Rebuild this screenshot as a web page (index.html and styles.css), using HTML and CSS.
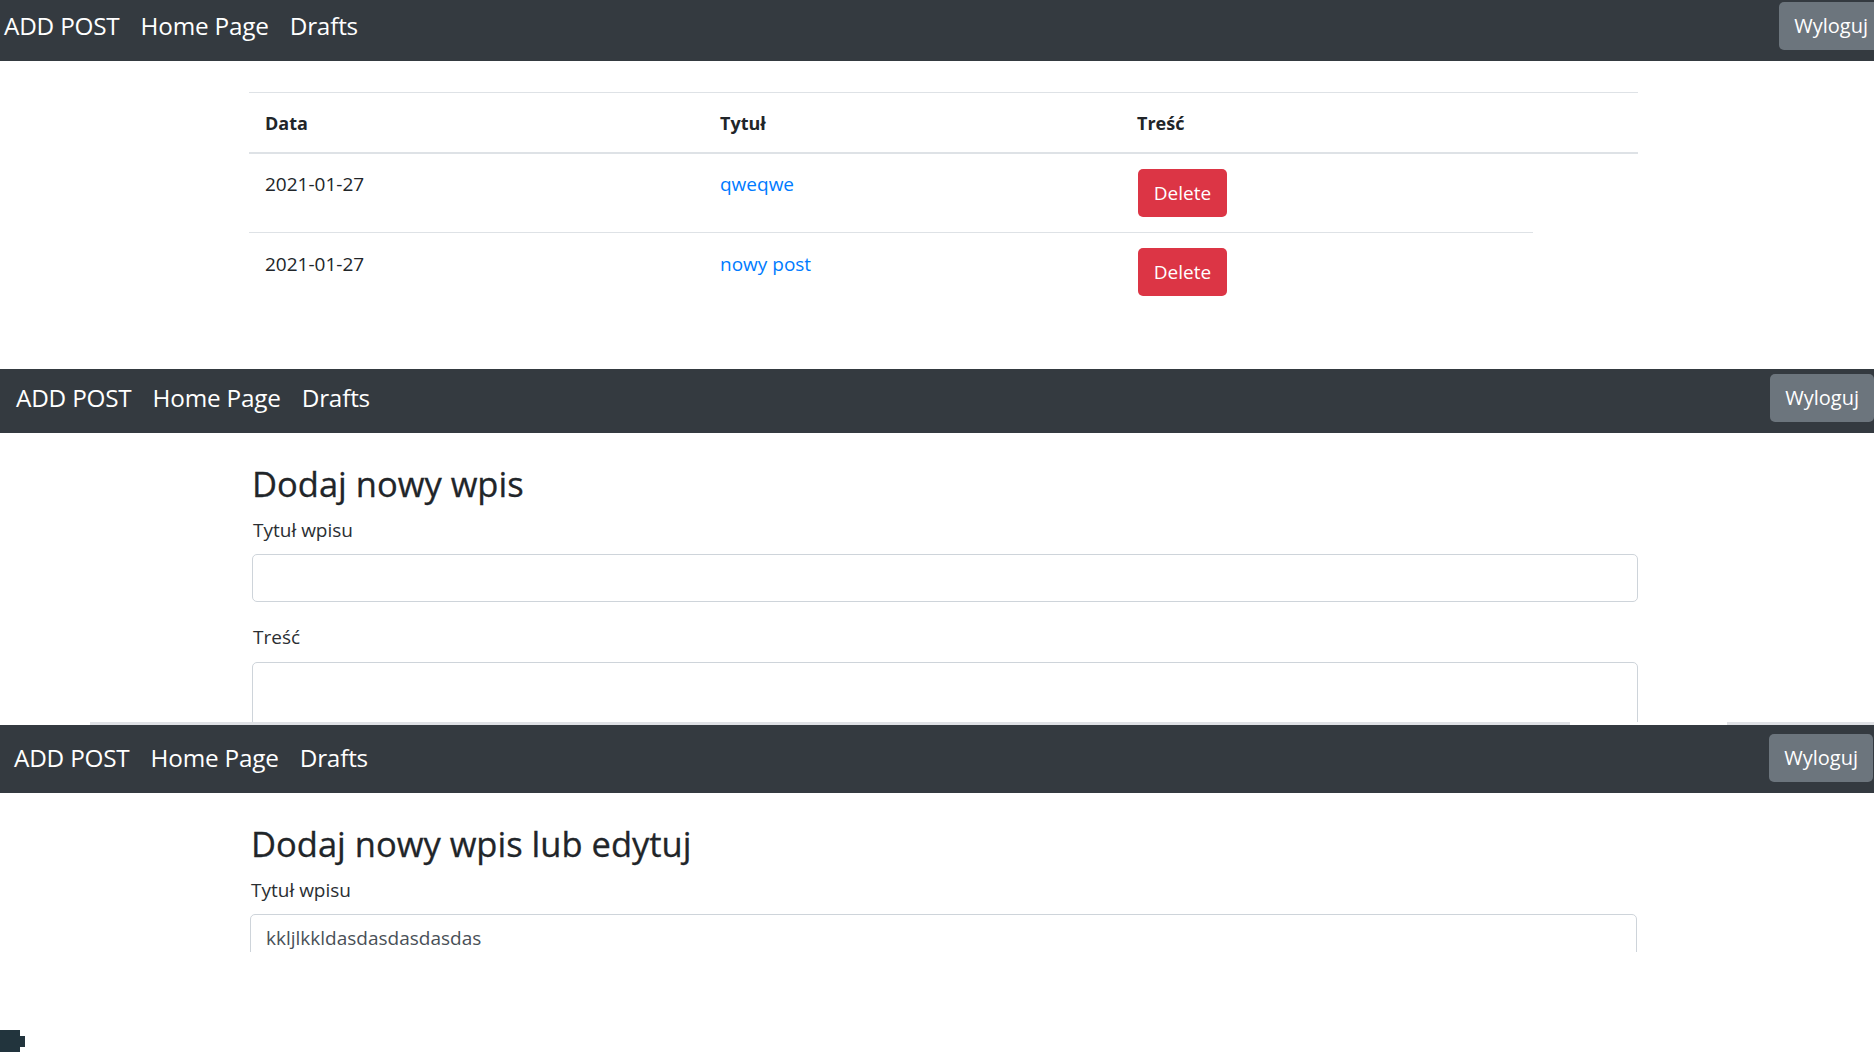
FILE: index.html
```html
<!DOCTYPE html>
<html lang="pl">
<head>
<meta charset="utf-8">
<title>Posts</title>
<link rel="stylesheet" href="styles.css">
</head>
<body>
<section class="shot shot-1">
  <nav class="navbar nav-1">
    <div class="nav-links">
      <a class="nav-link" href="#">ADD POST</a>
      <a class="nav-link" href="#">Home Page</a>
      <a class="nav-link" href="#">Drafts</a>
    </div>
    <button class="btn-logout" type="button">Wyloguj</button>
  </nav>
  <div class="posts">
    <div class="posts-head">
      <div class="th">Data</div>
      <div class="th">Tytuł</div>
      <div class="th">Treść</div>
    </div>
    <div class="posts-row row-first">
      <div class="td">2021-01-27</div>
      <div class="td"><a class="post-link" href="#">qweqwe</a></div>
      <div class="td-btn"><button class="btn-delete" type="button">Delete</button></div>
    </div>
    <div class="posts-row row-last">
      <div class="td">2021-01-27</div>
      <div class="td"><a class="post-link" href="#">nowy post</a></div>
      <div class="td-btn"><button class="btn-delete" type="button">Delete</button></div>
    </div>
  </div>
</section>

<section class="shot shot-2">
  <nav class="navbar nav-2">
    <div class="nav-links">
      <a class="nav-link" href="#">ADD POST</a>
      <a class="nav-link" href="#">Home Page</a>
      <a class="nav-link" href="#">Drafts</a>
    </div>
    <button class="btn-logout" type="button">Wyloguj</button>
  </nav>
  <form class="post-form form-2">
    <h2 class="form-title">Dodaj nowy wpis</h2>
    <div class="form-group">
      <label class="form-label">Tytuł wpisu</label>
      <input class="form-control" type="text">
    </div>
    <div class="form-group">
      <label class="form-label">Treść</label>
      <textarea class="form-control form-area"></textarea>
    </div>
  </form>
</section>

<div class="seam">
  <div class="seam-blank seam-left"></div>
  <div class="seam-bar seam-bar-a"></div>
  <div class="seam-blank seam-gap"></div>
  <div class="seam-bar seam-bar-b"></div>
</div>

<section class="shot shot-3">
  <nav class="navbar nav-3">
    <div class="nav-links">
      <a class="nav-link" href="#">ADD POST</a>
      <a class="nav-link" href="#">Home Page</a>
      <a class="nav-link" href="#">Drafts</a>
    </div>
    <button class="btn-logout" type="button">Wyloguj</button>
  </nav>
  <form class="post-form form-3">
    <h2 class="form-title">Dodaj nowy wpis lub edytuj</h2>
    <div class="form-group">
      <label class="form-label">Tytuł wpisu</label>
      <input class="form-control" type="text" value="kkljlkkldasdasdasdasdas">
    </div>
  </form>
</section>

<div class="page-foot">
  <svg class="corner-mark" width="26" height="22" viewBox="0 0 26 22" aria-hidden="true">
    <path d="M0 0 H20 V6 H25 V17 H20 V22 H0 Z" fill="#22343d"/>
  </svg>
</div>
</body>
</html>
```

FILE: styles.css
```css
html, body {
  margin: 0;
  padding: 0;
  background: #fff;
  width: 1874px;
  height: 1052px;
  overflow: hidden;
  font-family: "Open Sans", "Noto Sans", "Liberation Sans", sans-serif;
  color: #212529;
}

.shot {
  overflow: hidden;
  box-sizing: border-box;
}

.shot-1 { height: 369px; }
.shot-2 { height: 353px; }
.shot-3 { height: 227px; }

/* Navbar */
.navbar {
  display: flex;
  align-items: flex-start;
  background: #343a40;
  box-sizing: border-box;
  overflow: hidden;
}

.nav-1 { height: 61px; padding: 2px 0 0 4px; }
.nav-1 .btn-logout { margin-right: -9px; }

.nav-2 { height: 64px; padding: 5px 0 0 16px; }

.nav-3 { height: 68px; padding: 9px 1px 0 14px; }

.nav-links {
  display: flex;
  gap: 21px;
}

.nav-link {
  color: #fff;
  text-decoration: none;
  font-size: 24.3px;
  line-height: 48px;
  height: 48px;
  white-space: nowrap;
  letter-spacing: -0.2px;
}

.btn-logout {
  margin-left: auto;
  flex: none;
  height: 48px;
  padding: 0 15px;
  border: 0;
  border-radius: 5px;
  background: #6c757d;
  color: #fff;
  font-family: inherit;
  font-size: 20px;
  line-height: 48px;
  white-space: nowrap;
}

/* Posts table */
.posts {
  margin: 31px 0 0 249px;
  width: 1389px;
}

.posts-head,
.posts-row {
  display: grid;
  grid-template-columns: 455px 417px 1fr;
}

.posts-head {
  border-top: 1px solid #dee2e6;
  border-bottom: 2px solid #dee2e6;
}

.th {
  padding: 16px 16px 14px;
  font-size: 18px;
  line-height: 29px;
  font-weight: 700;
}

.posts-row {
  align-items: start;
}

.row-first {
  width: 1284px;
  border-bottom: 1px solid #dee2e6;
}

.td {
  padding: 16px 16px 0;
  font-size: 19px;
  line-height: 28.5px;
}

.row-last .td { padding-top: 17px; }

.td-btn {
  padding: 15px 16px 15px 17px;
}

.post-link {
  color: #007bff;
  text-decoration: none;
}

.btn-delete {
  display: block;
  height: 48px;
  width: 89px;
  padding: 0;
  border: 0;
  border-radius: 5px;
  background: #dc3545;
  color: #fff;
  font-family: inherit;
  font-size: 19px;
  line-height: 48px;
}

/* Forms */
.post-form {
  margin: 0;
  padding-top: 31px;
}

.form-2 { margin-left: 252px; width: 1386px; }
.form-3 { margin-left: 250px; width: 1387px; }

.form-title {
  margin: 0 0 11px;
  font-size: 34.5px;
  line-height: 40.8px;
  font-weight: 500;
  color: #212529;
  -webkit-text-stroke: 0.3px #212529;
}

.form-3 .form-title { margin-left: 1px; }

.form-group {
  margin-bottom: 21px;
}

.form-label {
  display: block;
  margin: 0 0 10px 1px;
  font-size: 19px;
  line-height: 28.5px;
  color: #2b2f33;
}

.form-control {
  display: block;
  box-sizing: border-box;
  width: 100%;
  height: 48px;
  margin: 0;
  padding: 0 15px;
  border: 1px solid #ced4da;
  border-radius: 5px;
  background: #fff;
  font-family: inherit;
  font-size: 19px;
  color: #495057;
  outline: none;
}

.form-area {
  height: 120px;
  resize: none;
}

/* Seam between screenshots */
.seam {
  display: flex;
  height: 3px;
}

.seam-blank { background: #fff; }
.seam-left { width: 90px; }
.seam-gap { width: 157px; border-radius: 3px 3px 0 0; }
.seam-bar { background: #dfe1e5; }
.seam-bar-a { width: 1480px; }
.seam-bar-b { flex: 1; }

/* Footer area */
.page-foot {
  height: 100px;
  display: flex;
  align-items: flex-end;
}

.corner-mark {
  display: block;
}
```
